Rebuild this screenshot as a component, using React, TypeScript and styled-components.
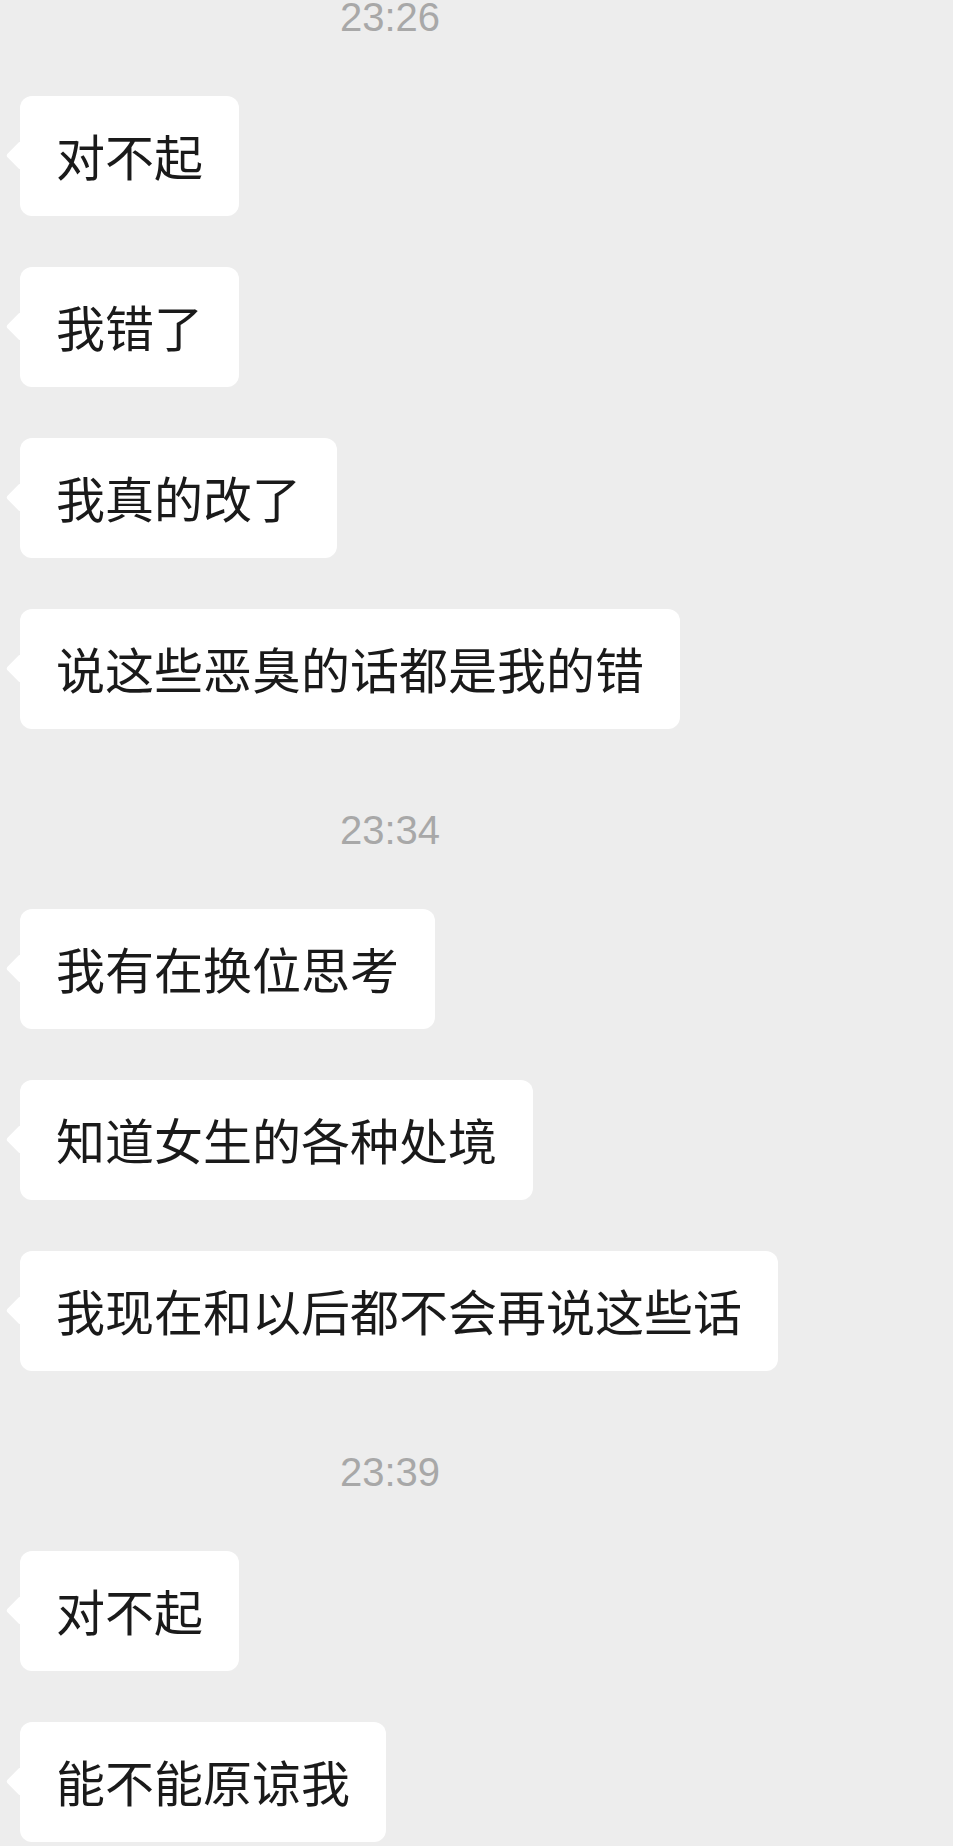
import styled, { createGlobalStyle } from "styled-components";

const GlobalStyle = createGlobalStyle`
  html, body {
    margin: 0;
    padding: 0;
    background: #ededed;
  }
  body {
    font-family: "Noto Sans CJK SC", "Noto Sans", sans-serif;
    overflow: hidden;
  }
`;

const ChatLog = styled.div`
  display: flex;
  flex-direction: column;
  align-items: flex-start;
  padding: 0 0 0 20px;
  min-height: 1846px;
  background: #ededed;
`;

const TimeGroup = styled.section<{ $first?: boolean }>`
  display: flex;
  flex-direction: column;
  align-items: flex-start;
  gap: 51px;
  margin-top: ${(p) => (p.$first ? "-3px" : "81px")};
`;

const Timestamp = styled.div`
  width: 740px;
  height: 40px;
  margin-bottom: 8px;
  font-family: "Liberation Sans", Arial, sans-serif;
  font-size: 40px;
  line-height: 40px;
  text-align: center;
  color: #a8a8a8;
`;

const Bubble = styled.div`
  position: relative;
  box-sizing: border-box;
  height: 120px;
  padding: 0 36px;
  border-radius: 12px;
  background: #ffffff;
  color: #1a1a1a;
  font-size: 49px;
  line-height: 118px;
  white-space: nowrap;

  &::before {
    content: "";
    position: absolute;
    left: -10px;
    top: 49px;
    width: 21px;
    height: 21px;
    background: #ffffff;
    border-radius: 3px;
    transform: rotate(45deg);
  }
`;

const groups = [
  {
    time: "23:26",
    messages: ["对不起", "我错了", "我真的改了", "说这些恶臭的话都是我的错"],
  },
  {
    time: "23:34",
    messages: ["我有在换位思考", "知道女生的各种处境", "我现在和以后都不会再说这些话"],
  },
  {
    time: "23:39",
    messages: ["对不起", "能不能原谅我"],
  },
];

function App() {
  return (
    <>
      <GlobalStyle />
      <ChatLog>
        {groups.map((g, i) => (
          <TimeGroup key={g.time} $first={i === 0}>
            <Timestamp>{g.time}</Timestamp>
            {g.messages.map((m, j) => (
              <Bubble key={j}>{m}</Bubble>
            ))}
          </TimeGroup>
        ))}
      </ChatLog>
    </>
  );
}

export default App;
